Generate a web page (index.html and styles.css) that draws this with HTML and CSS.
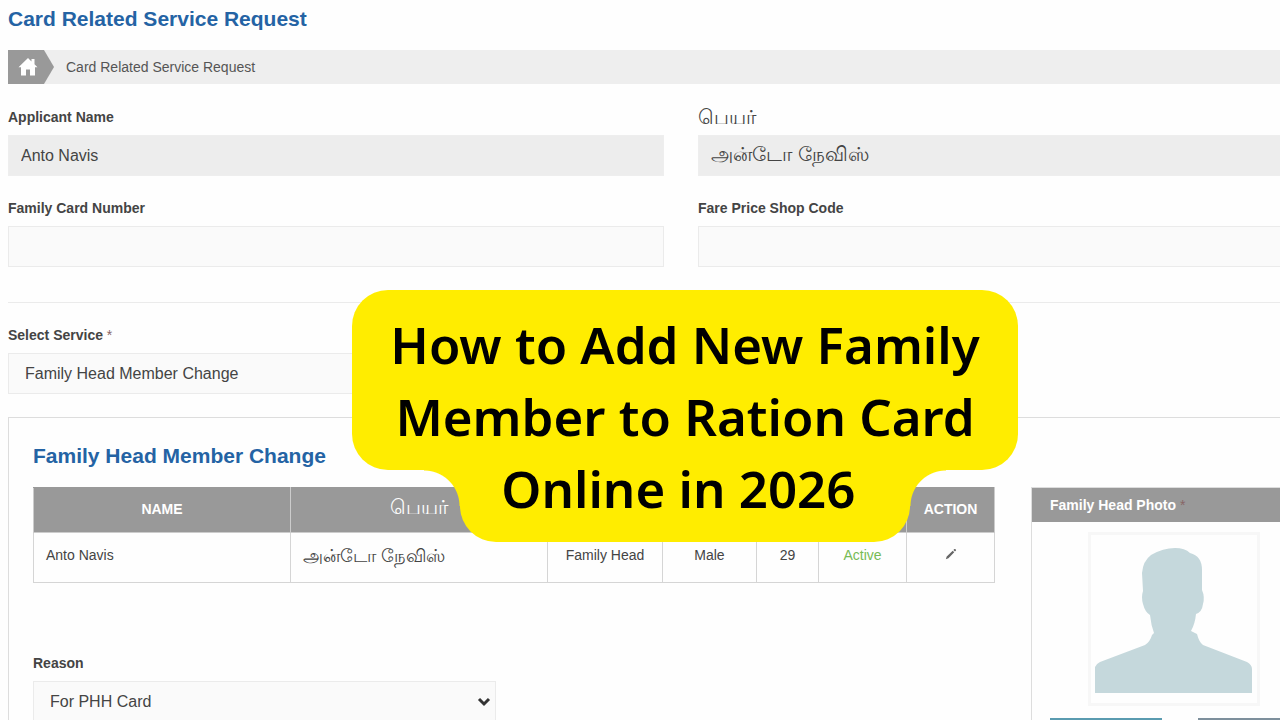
FILE: index.html
```html
<!DOCTYPE html>
<html lang="en">
<head>
  <meta charset="UTF-8">
  <meta name="viewport" content="width=device-width, initial-scale=1.0">
  <title>Card Related Service Request</title>
  <link rel="stylesheet" href="styles.css">
</head>
<body>
  <main class="page">
    <h1 class="page-title">Card Related Service Request</h1>

    <nav class="breadcrumb">
      <a href="#" class="home-link" aria-label="Home">
        <svg width="20" height="20" viewBox="0 0 20 20" fill="#fff">
          <path d="M10 1 L13.500 4.400 V2 H16.500 V7.300 L19.500 10.200 H17 V18.500 H12 V12.500 H8 V18.500 H3 V10.200 H0.500 Z"/>
        </svg>
      </a>
      <span class="breadcrumb-text">Card Related Service Request</span>
    </nav>

    <form>
      <div class="form-grid">
        <div class="field">
          <label for="applicantName">Applicant Name</label>
          <input type="text" id="applicantName" value="Anto Navis" readonly>
        </div>
        <div class="field">
          <label for="nameTamil" class="tamil-label" lang="ta">பெயர்</label>
          <input type="text" id="nameTamil" class="tamil" lang="ta" value="அன்டோ நேவிஸ்" readonly>
        </div>
        <div class="field">
          <label for="cardNumber">Family Card Number</label>
          <input type="text" id="cardNumber">
        </div>
        <div class="field">
          <label for="shopCode">Fare Price Shop Code</label>
          <input type="text" id="shopCode">
        </div>
      </div>

      <hr class="divider">

      <div class="form-grid">
        <div class="field">
          <label for="service">Select Service <span class="required">*</span></label>
          <select id="service">
            <option>Family Head Member Change</option>
          </select>
        </div>
      </div>

      <section class="panel">
        <h2 class="page-title">Family Head Member Change</h2>
        <div class="panel-grid">
          <div class="members">
            <table class="member-table">
              <colgroup>
                <col class="col-name">
                <col class="col-name">
                <col class="col-relation">
                <col class="col-gender">
                <col class="col-age">
                <col class="col-status">
                <col class="col-action">
              </colgroup>
              <thead>
                <tr>
                  <th>NAME</th>
                  <th class="tamil-label" lang="ta">பெயர்</th>
                  <th></th>
                  <th></th>
                  <th></th>
                  <th></th>
                  <th>ACTION</th>
                </tr>
              </thead>
              <tbody>
                <tr>
                  <td class="left">Anto Navis</td>
                  <td class="left tamil-cell" lang="ta">அன்டோ நேவிஸ்</td>
                  <td>Family Head</td>
                  <td>Male</td>
                  <td>29</td>
                  <td class="active">Active</td>
                  <td>
                    <button type="button" class="edit-btn" aria-label="Edit">
                      <svg width="12" height="12" viewBox="0 0 14 14" fill="#666">
                        <path d="M1 13 L2 10 L9 3.200 L10.800 5 L4 12 Z M9.800 2.400 L11 1.200 Q11.500 0.800 12 1.300 L12.700 2 Q13.200 2.500 12.800 3 L11.600 4.200 Z"/>
                      </svg>
                    </button>
                  </td>
                </tr>
              </tbody>
            </table>

            <div class="reason-row">
              <div class="field">
                <label for="reason">Reason</label>
                <div class="select-wrap">
                  <select id="reason">
                    <option>For PHH Card</option>
                  </select>
                  <svg class="chevron" width="14" height="10" viewBox="0 0 14 10" fill="none" stroke="#333" stroke-width="3">
                    <path d="M2 2 L7 7 L12 2"/>
                  </svg>
                </div>
              </div>
            </div>
          </div>

          <aside class="photo-card">
            <h3 class="photo-title">Family Head Photo <span class="required">*</span></h3>
            <div class="photo-frame">
              <svg viewBox="0 0 158 146" fill="#c5d8dc">
                <path d="M0 146 V120 Q1 117 5 115 L50 98 Q55 95 57 88 L59 86 Q56 78 55 68 Q50 65 48 57 Q46 50 48 44 L47 26 Q48 14 56 8 Q68 1 80 1 Q90 1 95 6 Q107 9 107 23 L107 43 Q110 50 108 57 Q107 65 101 67 Q100 77 96 84 L102 87 Q104 95 108 98 L152 115 Q157 118 157 122 V146 Z"/>
              </svg>
            </div>
            <div class="photo-actions">
              <button type="button" class="btn-upload" aria-label="Upload"></button>
              <button type="button" class="btn-clear" aria-label="Clear"></button>
            </div>
          </aside>
        </div>
      </section>
    </form>
  </main>

  <!-- Headline over the form -->
  <div class="headline">
    <div class="headline-top">How to Add New Family<br>Member to Ration Card</div>
    <div class="headline-bottom">Online in 2026&nbsp;</div>
  </div>
</body>
</html>
```
FILE: styles.css
```css
* {
  box-sizing: border-box;
}

body {
  font-family: "Liberation Sans", Arial, sans-serif;
  font-size: 14px;
  margin: 0;
  height: 100vh;
  overflow: hidden;
  position: relative;
  background-color: #fefefe;
  color: #444;
}

/* The form runs past the right edge of the window */
.page {
  margin: 0 -74px 0 8px;
  padding-top: 7px;
}

.page-title {
  margin: 0 0 19px;
  font-size: 21px;
  line-height: 24px;
  color: #2463a4;
}

.breadcrumb {
  display: flex;
  align-items: center;
  height: 34px;
  margin-bottom: 24px;
  background-color: #eee;
}

.home-link {
  display: flex;
  align-items: center;
  width: 46px;
  height: 34px;
  padding-left: 10px;
  background-color: #999;
  clip-path: polygon(0 0, 36px 0, 46px 50%, 36px 100%, 0 100%);
}

.breadcrumb-text {
  margin-left: 12px;
  color: #555;
}

.form-grid {
  display: grid;
  grid-template-columns: 1fr 1fr;
  gap: 23px 34px;
}

.field {
  display: flex;
  flex-direction: column;
  gap: 9px;
}

label {
  font-weight: bold;
  line-height: 18px;
}

.required {
  font-weight: normal;
  color: #866;
}

input,
select {
  width: 100%;
  height: 41px;
  padding: 0 12px;
  border: 1px solid #ebebeb;
  border-radius: 0;
  background-color: #fafafa;
  color: #444;
  font-family: inherit;
  font-size: 16px;
}

input[readonly] {
  border-color: #eee;
  background-color: #ededed;
}

select {
  appearance: none;
  padding: 0 16px;
}

.tamil-label {
  font-size: 20px;
  font-weight: 500;
}

input.tamil {
  font-size: 20px;
  font-weight: 500;
}

.divider {
  height: 1px;
  margin: 35px 0 23px;
  border: none;
  background-color: #ebebeb;
}

.panel {
  margin-top: 23px;
  padding: 26px 24px;
  border: 1px solid #ddd;
}

.panel-grid {
  display: grid;
  grid-template-columns: 1fr 298px;
  gap: 36px;
}

.member-table {
  width: 100%;
  table-layout: fixed;
  border-collapse: collapse;
}

.col-relation { width: 115px; }
.col-gender { width: 94px; }
.col-age { width: 62px; }
.col-status { width: 88px; }
.col-action { width: 88px; }

th {
  height: 45px;
  padding: 0 0 3px;
  border: 1px solid #ccc;
  border-top-color: #999;
  background-color: #999;
  color: #fff;
}

td {
  height: 50px;
  padding: 0 12px 5px;
  border: 1px solid #d5d5d5;
  text-align: center;
}

td.left {
  text-align: left;
}

td.tamil-cell {
  padding-bottom: 0;
  font-size: 18px;
  font-weight: 500;
}

td.active {
  color: #7b5;
}

.edit-btn {
  padding: 0;
  border: none;
  background: none;
}

.reason-row {
  display: grid;
  grid-template-columns: 1fr 1fr;
  gap: 36px;
  margin-top: 71px;
}

.select-wrap {
  position: relative;
}

.chevron {
  position: absolute;
  top: 16px;
  right: 5px;
}

.photo-card {
  border: 1px solid #ddd;
}

.photo-title {
  height: 34px;
  margin: 0;
  padding-left: 18px;
  background-color: #999;
  color: #fff;
  font-size: 14px;
  line-height: 34px;
}

.photo-frame {
  width: 172px;
  height: 174px;
  margin: 10px 0 12px 56px;
  padding: 12px 4px;
  border: 3px solid #f7f7f7;
}

.photo-frame svg {
  display: block;
  width: 100%;
}

.photo-actions {
  display: grid;
  grid-template-columns: 1fr 1fr;
  gap: 36px;
  padding: 0 18px 18px;
}

.photo-actions button {
  height: 34px;
  border: none;
}

.btn-upload {
  background-color: #5a9bb0;
}

.btn-clear {
  background-color: #7d8f9c;
}

.headline {
  position: absolute;
  top: 290px;
  left: 27.5%;
  width: 666px;
  display: flex;
  flex-direction: column;
  align-items: center;
  font-family: "Noto Sans", "Open Sans", sans-serif;
  font-size: 51px;
  font-weight: 600;
  line-height: 72px;
  text-align: center;
  white-space: nowrap;
  color: #000;
}

.headline-top {
  width: 100%;
  padding: 18px 0;
  border-radius: 36px;
  background-color: #ffed00;
}

.headline-bottom {
  position: relative;
  width: 450px;
  margin-top: -18px;
  padding-bottom: 18px;
  border-radius: 0 0 36px 36px;
  background-color: #ffed00;
}

/* Rounded inner corners where the two blocks meet */
.headline-bottom::before,
.headline-bottom::after {
  content: "";
  position: absolute;
  top: 18px;
  width: 36px;
  height: 36px;
}

.headline-bottom::before {
  right: 100%;
  background: radial-gradient(circle at 0 100%, transparent 35px, #ffed00 36px);
}

.headline-bottom::after {
  left: 100%;
  background: radial-gradient(circle at 100% 100%, transparent 35px, #ffed00 36px);
}
```
